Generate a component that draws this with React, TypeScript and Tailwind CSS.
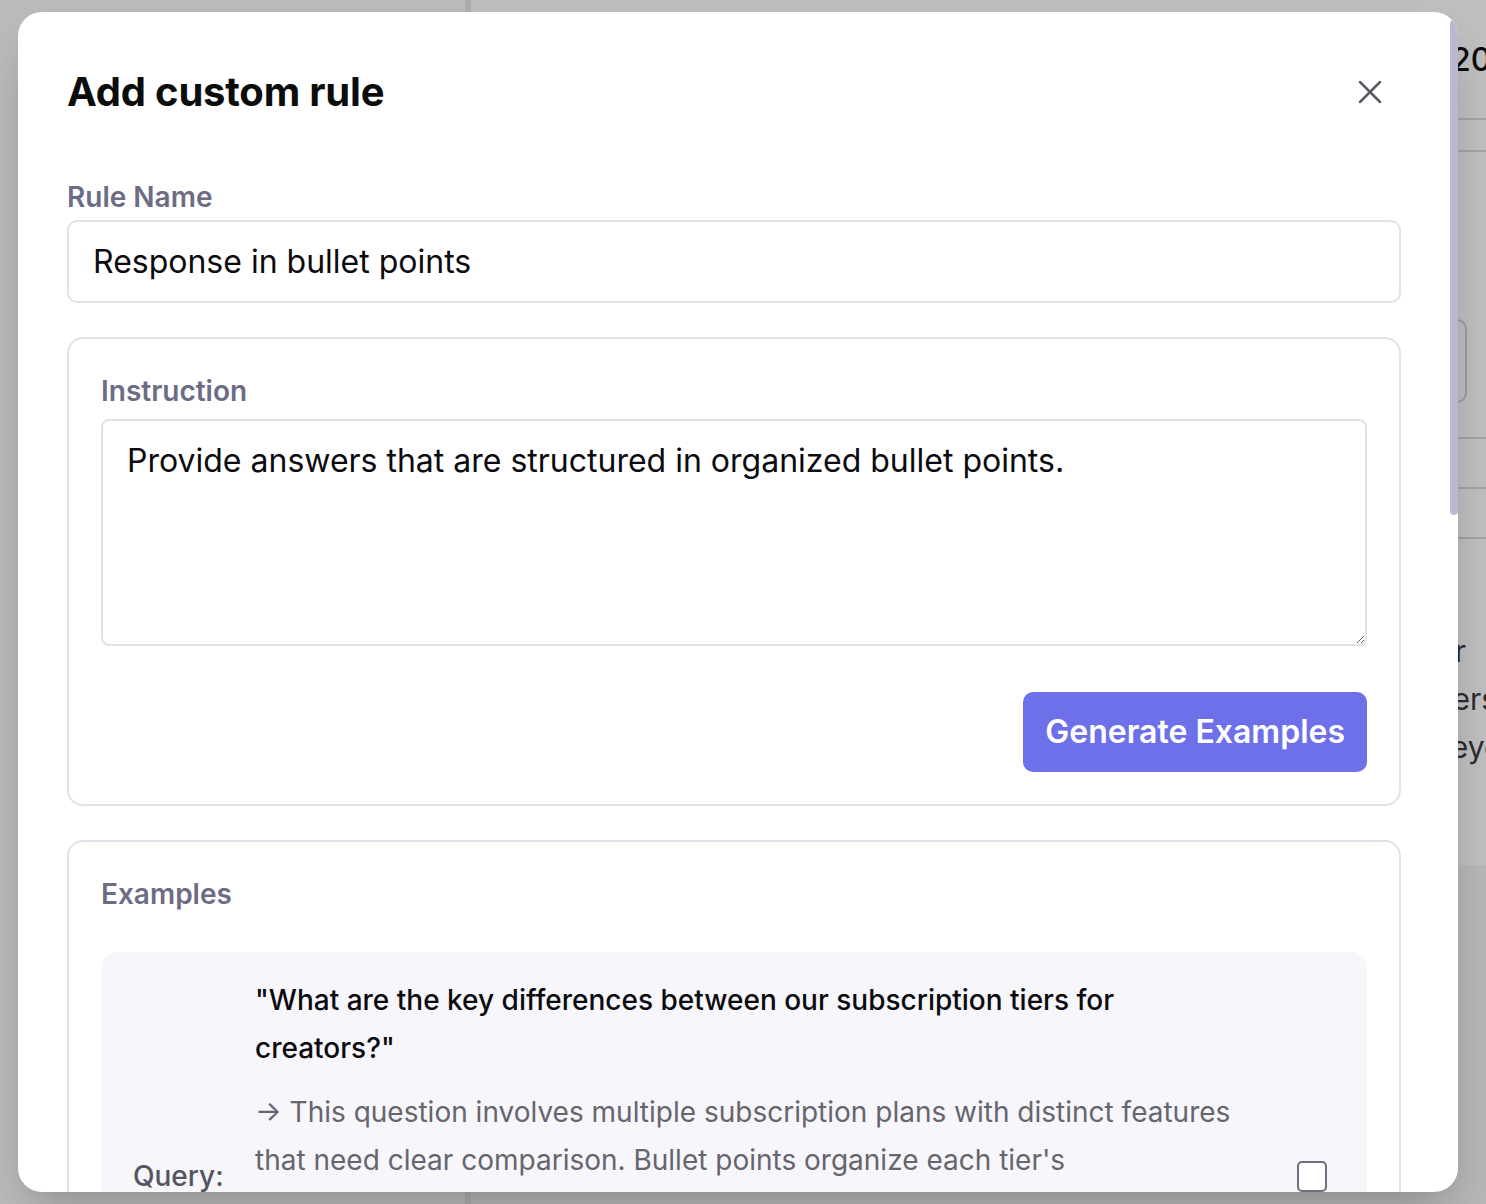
import React from 'react';
import { X } from 'lucide-react';

const Background: React.FC = () => (
  <div className="flex h-[1204px] w-[1486px] overflow-hidden bg-white">
    <aside className="w-[471px] shrink-0 border-r-[6px] border-[#e8e8ee] bg-[#fafafa]" />
    <main className="flex w-[1300px] shrink-0 flex-col">
      <div className="flex h-[118px] items-center pl-[980px] pt-[2px] text-[32px] font-medium text-[#111]">2025</div>
      <div className="h-[32px] border-t-2 border-[#d9d9df]" />
      <div className="flex h-[287px] items-end border-t-2 border-[#d9d9df] pb-[34px] pl-[736px]">
        <div className="h-[84px] w-[260px] rounded-[10px] border-2 border-[#cfcfd6]" />
      </div>
      <div className="h-[50px] border-t-2 border-[#d9d9df]" />
      <div className="h-[50px] border-t-2 border-[#d9d9df]" />
      <div className="flex h-[328px] flex-col border-t-2 border-[#d9d9df] pl-[900px] pt-[88px] text-[30px] leading-[48px] text-[#3a3a44]">
        <span>for our</span>
        <span>for users</span>
        <span>and beyond</span>
      </div>
      <div className="flex-1 bg-[#f4f4f6]" />
    </main>
  </div>
);

const App: React.FC = () => {
  return (
    <div className="relative h-[1204px] w-[1486px] overflow-hidden font-[Inter,sans-serif]">
      <Background />
      <div className="absolute inset-0 bg-black/25" />

      <div className="absolute left-[18px] top-[12px] h-[1180px] w-[1440px] overflow-hidden rounded-[24px] bg-white shadow-2xl">
        <div className="pl-[49px] pr-[57px] pt-[52px]">
          <div className="flex h-[56px] items-center justify-between">
            <h2 className="text-[40px] font-bold leading-[56px] tracking-[-0.2px] text-[#0b0d0c]">Add custom rule</h2>
            <button className="mr-[3px] flex h-[56px] w-[56px] items-center justify-center text-[#5b5b68]">
              <X size={40} strokeWidth={1.5} />
            </button>
          </div>

          <label className="mt-[57px] mb-[3px] block text-[28px] font-semibold leading-[40px] text-[#6d6c85]">Rule Name</label>
          <input
            readOnly
            value="Response in bullet points"
            className="block h-[83px] w-full rounded-[10px] border-2 border-[#e2e2ea] bg-white px-[24px] text-[32px] text-[#0b0b0f] outline-none"
          />

          <section className="mt-[34px] rounded-[16px] border-2 border-[#e2e2ea] p-[32px]">
            <label className="mb-[8px] block text-[28px] font-semibold leading-[40px] text-[#6d6c85]">Instruction</label>
            <textarea
              readOnly
              defaultValue="Provide answers that are structured in organized bullet points."
              className="block h-[227px] w-full resize-y rounded-[8px] border-2 border-[#e2e2ea] px-[24px] pt-[18px] text-[32px] leading-[44px] text-[#0b0b0f] outline-none"
            />
            <div className="mt-[46px] flex justify-end">
              <button className="h-[80px] rounded-[10px] bg-[#6e70e9] px-[22px] text-[32px] font-semibold text-white">
                Generate Examples
              </button>
            </div>
          </section>

          <section className="mt-[34px] rounded-[16px] border-2 border-[#e2e2ea] p-[32px]">
            <div className="mb-[38px] text-[28px] font-semibold leading-[40px] text-[#6d6c85]">Examples</div>
            <div className="rounded-[16px] bg-[#f6f6fb] pb-[24px] pl-[32px] pr-[40px] pt-[24px]">
              <div className="flex items-center">
                <div className="w-[122px] shrink-0 text-[28px] font-medium leading-[48px] text-[#55555f]">Query:</div>
                <div className="flex-1 pr-[48px]">
                  <p className="text-[28px] font-medium leading-[48px] text-[#0b0b0f]">
                    "What are the key differences between our subscription tiers for creators?"
                  </p>
                  <p className="mt-[16px] text-[28px] leading-[48px] text-[#65656f]">
                    → This question involves multiple subscription plans with distinct features that need clear comparison. Bullet points organize each tier's characteristics, pricing and limits into short, scannable lines, so creators can compare the options side by side at a glance without digging through long paragraphs, and quickly pick the plan that best suits the way they publish and earn.
                  </p>
                </div>
                <span className="h-[31px] w-[30px] shrink-0 rounded-[5px] border-2 border-[#6e6e80] bg-white" />
              </div>
            </div>
          </section>
          <div className="h-[900px]" />
        </div>
        <div className="absolute right-0 top-[8px] h-[495px] w-[8px] rounded-full bg-[#b9b8cc]" />
      </div>
    </div>
  );
};

export default App;
